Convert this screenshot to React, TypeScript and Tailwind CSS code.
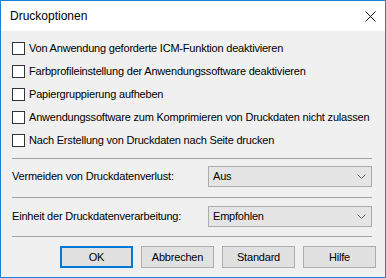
const options = [
  "Von Anwendung geforderte ICM-Funktion deaktivieren",
  "Farbprofileinstellung der Anwendungssoftware deaktivieren",
  "Papiergruppierung aufheben",
  "Anwendungssoftware zum Komprimieren von Druckdaten nicht zulassen",
  "Nach Erstellung von Druckdaten nach Seite drucken",
];

const Chevron = () => (
  <svg width="9" height="5" viewBox="0 0 9 5" className="shrink-0">
    <path d="M0.5 0.5 L4.5 4.5 L8.5 0.5" fill="none" stroke="#606060" strokeWidth="1" />
  </svg>
);

const Select = ({ value }: { value: string }) => (
  <div className="w-[164px] h-[21px] border border-[#acacac] bg-[#e5e5e5] flex items-center justify-between pl-[4px] pr-[5px]">
    <span>{value}</span>
    <Chevron />
  </div>
);

const Separator = () => <div className="h-px bg-[#a0a0a0] mr-[13px]" />;

const Button = ({ label, focused }: { label: string; focused?: boolean }) => (
  <div
    className={
      focused
        ? "w-[73px] h-[22px] border-2 border-[#0078d7] bg-[#e1e1e1] flex items-center justify-center"
        : "w-[73px] h-[22px] border border-[#adadad] bg-[#e1e1e1] flex items-center justify-center"
    }
  >
    {label}
  </div>
);

export default function App() {
  return (
    <div className="w-[386px] h-[278px] border border-[#1883d7] bg-[#f0f0f0] flex flex-col text-[11px] tracking-[-0.2px] text-black font-['Liberation_Sans',Arial,sans-serif] leading-none whitespace-nowrap">
      <div className="h-[30px] bg-white flex items-center justify-between pl-[9px] pr-[9px] shrink-0 text-[12px] tracking-normal">
        <span>Druckoptionen</span>
        <svg width="11" height="11" viewBox="0 0 11 11">
          <path d="M0.5 0.5 L10.5 10.5 M10.5 0.5 L0.5 10.5" stroke="#111" strokeWidth="1" />
        </svg>
      </div>

      <div className="flex flex-col pl-[11px] pt-[6px]">
        {options.map((o) => (
          <div key={o} className="h-[23px] flex items-center gap-[4px]">
            <div className="w-[13px] h-[13px] border border-[#333333] bg-white shrink-0" />
            <span>{o}</span>
          </div>
        ))}

        <div className="mt-[6px]">
          <Separator />
        </div>

        <div className="flex items-center mt-[7px]">
          <span className="w-[196px]">Vermeiden von Druckdatenverlust:</span>
          <Select value="Aus" />
        </div>

        <div className="mt-[10px]">
          <Separator />
        </div>

        <div className="flex items-center mt-[8px]">
          <span className="w-[196px]">Einheit der Druckdatenverarbeitung:</span>
          <Select value="Empfohlen" />
        </div>

        <div className="mt-[9px]">
          <Separator />
        </div>

        <div className="flex justify-end gap-[8px] pr-[9px] mt-[9px]">
          <Button label="OK" focused />
          <Button label="Abbrechen" />
          <Button label="Standard" />
          <Button label="Hilfe" />
        </div>
      </div>
    </div>
  );
}
